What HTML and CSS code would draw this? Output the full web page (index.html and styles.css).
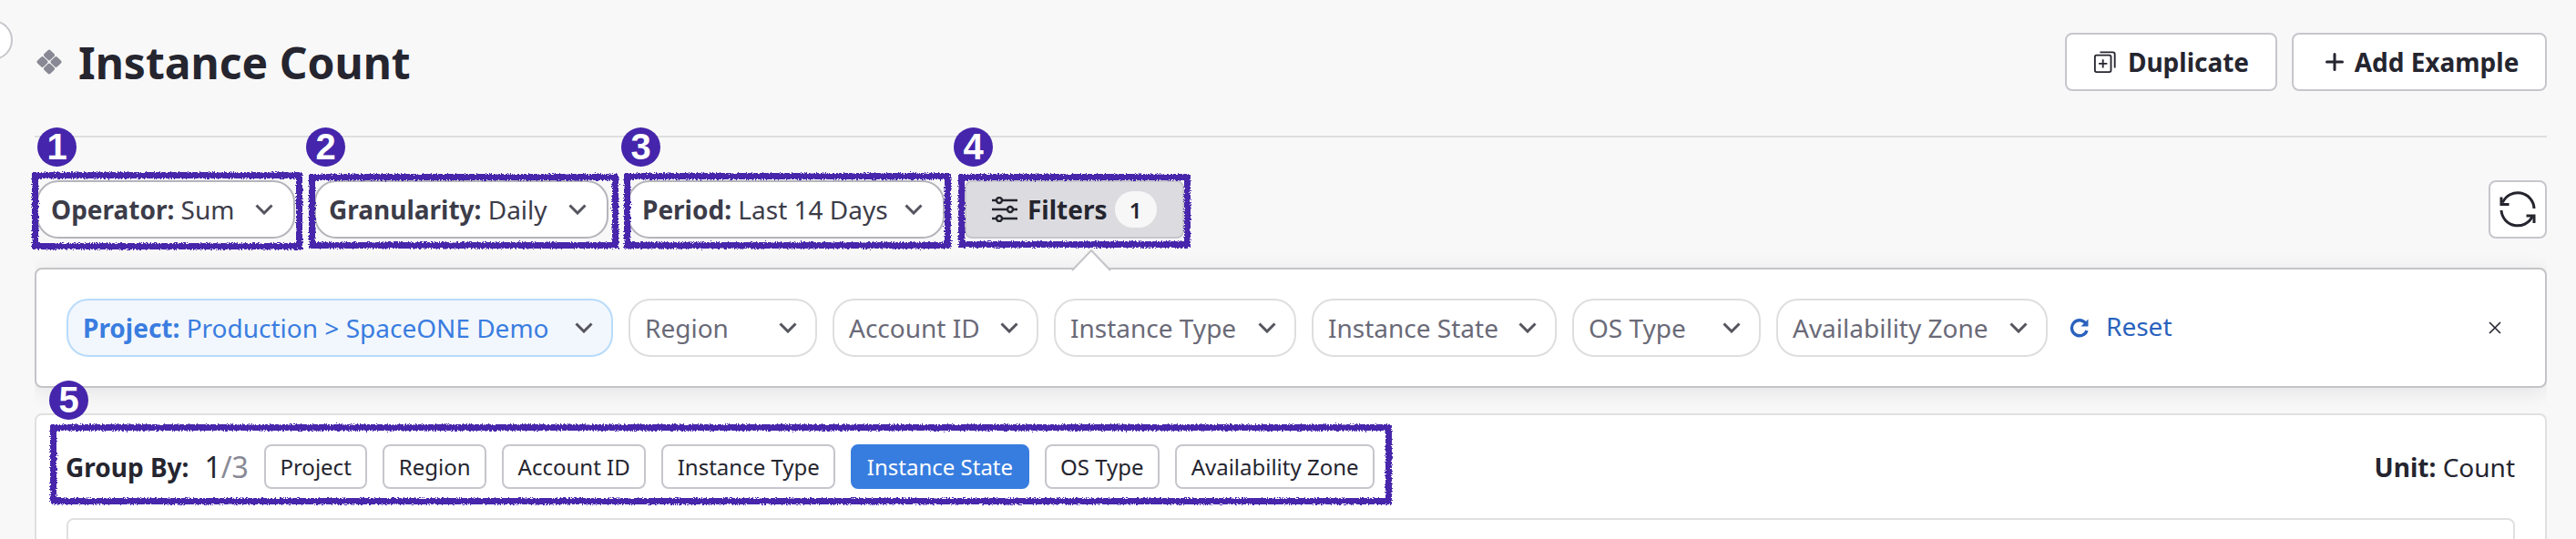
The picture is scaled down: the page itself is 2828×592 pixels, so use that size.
FILE: index.html
```html
<!DOCTYPE html>
<html lang="en">

<head>
    <meta charset="UTF-8">
    <title>Instance Count</title>
    <link rel="stylesheet" href="styles.css">
</head>

<body>
    <div class="page">
        <header class="header">
            <div class="title-wrap">
                <svg class="title-icon" viewBox="0 0 28 28"><g fill="#898995">
                    <rect x="9.200" y="1.700" width="9.600" height="9.600" rx="2" transform="rotate(45 14 6.500)"/>
                    <rect x="1.700" y="9.200" width="9.600" height="9.600" rx="2" transform="rotate(45 6.500 14)"/>
                    <rect x="16.700" y="9.200" width="9.600" height="9.600" rx="2" transform="rotate(45 21.500 14)"/>
                    <rect x="9.200" y="16.700" width="9.600" height="9.600" rx="2" transform="rotate(45 14 21.500)"/>
                </g></svg>
                <h1>Instance Count</h1>
            </div>
            <div class="header-buttons">
                <button class="btn btn-duplicate">
                    <svg class="icon-28" viewBox="0 0 28 28" fill="none" stroke="#25252f" stroke-width="2">
                        <rect x="2" y="6" width="19" height="20" rx="2"/>
                        <path d="M8 2.500h15a2.500 2.500 0 0 1 2.500 2.500v16"/>
                        <path d="M11.500 11v10M6.500 16h10"/>
                    </svg>
                    Duplicate
                </button>
                <button class="btn btn-add">
                    <svg class="icon-plus" viewBox="0 0 20 20" fill="none" stroke="#25252f" stroke-width="3" stroke-linecap="round"><path d="M10 1.500v17M1.500 10h17"/></svg>
                    Add Example
                </button>
            </div>
        </header>

        <div class="toolbar">
            <div class="select select-operator"><span><b>Operator:</b> Sum</span><svg class="chevron" viewBox="0 0 20 12"><path d="M1.500 1.500 10 10l8.500-8.500"/></svg></div>
            <div class="select select-granularity"><span><b>Granularity:</b> Daily</span><svg class="chevron" viewBox="0 0 20 12"><path d="M1.500 1.500 10 10l8.500-8.500"/></svg></div>
            <div class="select select-period"><span><b>Period:</b> Last 14 Days</span><svg class="chevron" viewBox="0 0 20 12"><path d="M1.500 1.500 10 10l8.500-8.500"/></svg></div>
            <button class="filters-btn">
                <svg class="filters-icon" viewBox="0 0 28 28" fill="none" stroke="#25252f" stroke-width="2.400">
                    <path d="M0 4h28M0 14h28M0 24h28"/>
                    <g fill="#dcdce0"><circle cx="8" cy="4" r="3"/><circle cx="20" cy="14" r="3"/><circle cx="8" cy="24" r="3"/></g>
                </svg>
                <span>Filters</span>
                <span class="count">1</span>
            </button>
            <button class="btn-refresh">
                <svg viewBox="0 0 40 40" fill="none" stroke="#25252f" stroke-width="3">
                    <path d="M3.500 12.500A18 18 0 0 1 38 19"/>
                    <path d="M2 21a18 18 0 0 0 34 7"/>
                    <path d="M2 6.500v8h8.500M38 35v-8h-8.500"/>
                </svg>
            </button>
        </div>

        <div class="filter-panel">
            <div class="chip chip-active chip-project"><span><b>Project:</b> Production &gt; SpaceONE Demo</span><svg class="chevron" viewBox="0 0 20 12"><path d="M1.500 1.500 10 10l8.500-8.500"/></svg></div>
            <div class="chip chip-region"><span>Region</span><svg class="chevron" viewBox="0 0 20 12"><path d="M1.500 1.500 10 10l8.500-8.500"/></svg></div>
            <div class="chip chip-account"><span>Account ID</span><svg class="chevron" viewBox="0 0 20 12"><path d="M1.500 1.500 10 10l8.500-8.500"/></svg></div>
            <div class="chip chip-type"><span>Instance Type</span><svg class="chevron" viewBox="0 0 20 12"><path d="M1.500 1.500 10 10l8.500-8.500"/></svg></div>
            <div class="chip chip-state"><span>Instance State</span><svg class="chevron" viewBox="0 0 20 12"><path d="M1.500 1.500 10 10l8.500-8.500"/></svg></div>
            <div class="chip chip-os"><span>OS Type</span><svg class="chevron" viewBox="0 0 20 12"><path d="M1.500 1.500 10 10l8.500-8.500"/></svg></div>
            <div class="chip chip-zone"><span>Availability Zone</span><svg class="chevron" viewBox="0 0 20 12"><path d="M1.500 1.500 10 10l8.500-8.500"/></svg></div>
            <a class="reset">
                <svg class="reset-icon" viewBox="0 0 22 22" fill="none" stroke="#2a62bd" stroke-width="3.400">
                    <path d="M18 6.500A8.500 8.500 0 1 0 19 14"/>
                    <path d="M20.500 1.500v8h-8z" fill="#2a62bd" stroke="none"/>
                </svg>
                Reset
            </a>
            <svg class="close" viewBox="0 0 14 14" fill="none" stroke="#25252f" stroke-width="1.600"><path d="M1 1l12 12M13 1 1 13"/></svg>
            <svg class="panel-caret" viewBox="0 0 44 24"><path d="M1 23 22 1l21 22" fill="#fff" stroke="#c4c4c8" stroke-width="2"/></svg>
        </div>

        <section class="group-card">
            <div class="group-row">
                <b class="group-label">Group By:</b>
                <span class="group-count">1<i>/3</i></span>
                <button class="tag">Project</button>
                <button class="tag">Region</button>
                <button class="tag">Account ID</button>
                <button class="tag">Instance Type</button>
                <button class="tag tag-selected">Instance State</button>
                <button class="tag">OS Type</button>
                <button class="tag">Availability Zone</button>
                <span class="unit"><b>Unit:</b> Count</span>
            </div>
            <div class="chart-box"></div>
        </section>
    </div>

    <div class="side-handle"></div>

    <!-- annotation marks drawn over the screenshot -->
    <svg class="filter-defs" width="0" height="0">
        <filter id="rough" x="-5%" y="-5%" width="110%" height="110%">
            <feTurbulence type="fractalNoise" baseFrequency="0.7" numOctaves="2" seed="4"/>
            <feDisplacementMap in="SourceGraphic" scale="5"/>
        </filter>
    </svg>
    <div class="mark mark-1"></div>
    <div class="mark mark-2"></div>
    <div class="mark mark-3"></div>
    <div class="mark mark-4"></div>
    <div class="mark mark-5"></div>
    <div class="badge badge-1">1</div>
    <div class="badge badge-2">2</div>
    <div class="badge badge-3">3</div>
    <div class="badge badge-4">4</div>
    <div class="badge badge-5">5</div>
</body>

</html>
```

FILE: styles.css
```css
* {
    box-sizing: border-box;
}

body {
    margin: 0;
    width: 2828px;
    height: 592px;
    overflow: hidden;
    position: relative;
    background-color: #f8f8f8;
    font-family: "Noto Sans", sans-serif;
    font-size: 28px;
    color: #25252f;
}

button {
    font-family: inherit;
    color: inherit;
}

.page {
    width: 2758px;
    height: 592px;
    margin-left: 38px;
    overflow: hidden;
}

/* header */
.header {
    display: flex;
    justify-content: space-between;
    height: 151px;
    padding-top: 36px;
    border-bottom: 2px solid #dedee0;
}

.title-wrap {
    display: flex;
    align-items: flex-start;
    margin-top: 1px;
}

.title-icon {
    width: 28px;
    height: 28px;
    margin: 17px 18px 0 2px;
}

h1 {
    margin: 0;
    font-size: 48px;
    line-height: 64px;
    font-weight: 700;
    color: #25252f;
}

.header-buttons {
    display: flex;
    gap: 16px;
}

.btn {
    display: flex;
    align-items: center;
    justify-content: center;
    height: 64px;
    background-color: #fff;
    border: 2px solid #c6c6cc;
    border-radius: 8px;
    font-size: 28px;
    font-weight: 700;
}

.btn-duplicate {
    width: 233px;
    gap: 12px;
}

.btn-add {
    width: 280px;
    gap: 12px;
}

.icon-28 {
    width: 26px;
    height: 28px;
}

.icon-plus {
    width: 20px;
    height: 20px;
    margin-left: 6px;
}

/* toolbar */
.toolbar {
    display: flex;
    align-items: center;
    gap: 21px;
    height: 64px;
    margin-top: 47px;
    padding-left: 2px;
}

.select,
.chip {
    display: flex;
    align-items: center;
    justify-content: space-between;
    height: 64px;
    padding: 0 22px 0 16px;
    background-color: #fff;
    border-radius: 24px;
    white-space: nowrap;
}

.select {
    border: 2px solid #b4b4bb;
    color: #3c3c49;
    padding-left: 14px;
}

.select-operator { width: 284px; }
.select-granularity { width: 323px; }
.select-period { width: 348px; }

.chevron {
    flex: none;
    width: 20px;
    height: 12px;
    fill: none;
    stroke: #55555f;
    stroke-width: 3;
}

.filters-btn {
    display: flex;
    align-items: center;
    width: 241px;
    height: 64px;
    margin-left: 1px;
    padding: 0 0 0 28px;
    background-color: #dcdce0;
    border: 2px solid #c6c6cc;
    border-radius: 8px;
    font-size: 28px;
    font-weight: 700;
}

.filters-icon {
    width: 28px;
    height: 28px;
    margin-right: 11px;
}

.count {
    display: flex;
    align-items: center;
    justify-content: center;
    width: 46px;
    height: 40px;
    margin-left: 8px;
    background-color: #f7f7f7;
    border-radius: 20px;
    font-size: 24px;
    font-weight: 600;
}

.btn-refresh {
    display: flex;
    align-items: center;
    justify-content: center;
    width: 64px;
    height: 64px;
    margin-left: auto;
    margin-right: 0;
    padding: 0;
    background-color: #fff;
    border: 2px solid #c6c6cc;
    border-radius: 8px;
}

.btn-refresh svg {
    width: 40px;
    height: 40px;
}

/* filter panel */
.filter-panel {
    position: relative;
    display: flex;
    align-items: center;
    gap: 17px;
    height: 132px;
    margin-top: 32px;
    padding-left: 33px;
    background-color: #fff;
    border: 2px solid #c4c4c8;
    border-radius: 8px;
    box-shadow: 0 4px 24px rgba(0, 0, 0, 0.09);
}

.chip {
    border: 2px solid #dedee0;
    color: #6a6a78;
    padding-right: 20px;
}

.chip-active {
    background-color: #f2f7fd;
    border-color: #b8dbfb;
    color: #3a7de0;
}

.chip-project { width: 600px; }
.chip-region { width: 207px; }
.chip-account { width: 226px; }
.chip-type { width: 266px; }
.chip-state { width: 269px; }
.chip-os { width: 207px; }
.chip-zone { width: 298px; }

.reset {
    display: flex;
    align-items: center;
    gap: 18px;
    margin-left: 7px;
    margin-top: -4px;
    color: #2a62bd;
}

.reset-icon {
    width: 22px;
    height: 22px;
    margin-top: 4px;
}

.close {
    position: absolute;
    right: 48px;
    top: 57px;
    width: 14px;
    height: 14px;
}

.panel-caret {
    position: absolute;
    left: 1136px;
    top: -22px;
    width: 44px;
    height: 24px;
}

/* group by card */
.group-card {
    height: 200px;
    margin-top: 28px;
    padding: 0 33px;
    background-color: #fff;
    border: 2px solid #e0e0e2;
    border-radius: 8px;
}

.group-row {
    display: flex;
    align-items: center;
    height: 113px;
}

.group-label {
    margin-left: -1px;
    margin-right: 17px;
}

.group-count {
    margin-right: 17px;
    font-size: 32px;
}

.group-count i {
    font-style: normal;
    color: #898995;
}

.tag {
    height: 49px;
    margin-right: 17px;
    padding: 0 15.5px;
    background-color: #fff;
    border: 2px solid #c6c6cc;
    border-radius: 8px;
    font-size: 24px;
    white-space: nowrap;
}

.tag-selected {
    background-color: #377ddf;
    border-color: #377ddf;
    color: #fff;
}

.unit {
    margin-left: auto;
}

.chart-box {
    height: 200px;
    background-color: #fff;
    border: 2px solid #e0e0e2;
    border-radius: 8px;
}

/* collapse handle cut off by the left edge */
.side-handle {
    position: absolute;
    left: -30px;
    top: 22px;
    width: 44px;
    height: 44px;
    background-color: #fff;
    border: 2px solid #c6c6cc;
    border-radius: 50%;
}

/* annotations */
.filter-defs {
    position: absolute;
}

.mark {
    position: absolute;
    border: 7px solid #4726ab;
    filter: url(#rough);
}

.mark-1 { left: 35px; top: 189px; width: 297px; height: 85px; }
.mark-2 { left: 339px; top: 191px; width: 340px; height: 82px; }
.mark-3 { left: 685px; top: 190px; width: 359px; height: 83px; }
.mark-4 { left: 1052px; top: 191px; width: 255px; height: 81px; }
.mark-5 { left: 55px; top: 466px; width: 1473px; height: 88px; }

.badge {
    position: absolute;
    display: flex;
    align-items: center;
    justify-content: center;
    width: 43px;
    height: 43px;
    background-color: #4525ab;
    border-radius: 50%;
    font-family: "Liberation Sans", sans-serif;
    font-size: 40px;
    font-weight: 700;
    color: #fff;
}

.badge-1 { left: 41px; top: 140px; }
.badge-2 { left: 336px; top: 140px; }
.badge-3 { left: 682px; top: 140px; }
.badge-4 { left: 1047px; top: 140px; }
.badge-5 { left: 54px; top: 418px; }
```
